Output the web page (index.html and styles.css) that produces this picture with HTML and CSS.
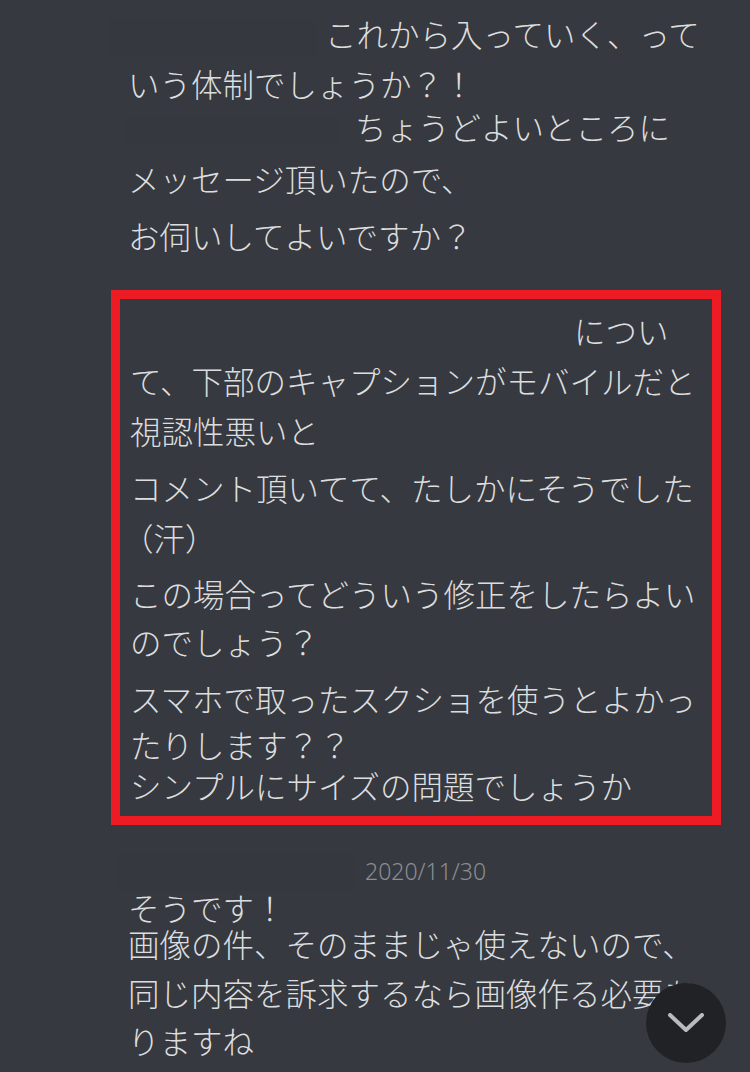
FILE: index.html
```html
<!DOCTYPE html>
<html lang="ja">
<head>
    <meta charset="UTF-8">
    <meta name="viewport" content="width=device-width, initial-scale=1.0">
    <title>Chat</title>
    <link rel="stylesheet" href="styles.css">
</head>
<body>
    <div class="chat">
        <div class="msg">
            <div class="line"><span class="redact r1"></span>これから入っていく、って</div>
            <div class="line g10">いう体制でしょうか？！</div>
            <div class="line g3"><span class="redact r2"></span>ちょうどよいところに</div>
            <div class="line g12">メッセージ頂いたので、</div>
            <div class="line g17">お伺いしてよいですか？</div>
        </div>

        <div class="msg marked">
            <div class="line"><span class="spacer"></span>につい</div>
            <div class="line g10">て、下部のキャプションがモバイルだと</div>
            <div class="line g10">視認性悪いと</div>
            <div class="line g17">コメント頂いてて、たしかにそうでした</div>
            <div class="line g10 paren">（汗）</div>
            <div class="line g16">この場合ってどういう修正をしたらよい</div>
            <div class="line g8">のでしょう？</div>
            <div class="line g17">スマホで取ったスクショを使うとよかっ</div>
            <div class="line g6">たりします？？</div>
            <div class="line g1">シンプルにサイズの問題でしょうか</div>
        </div>

        <div class="msg reply">
            <div class="line head"><span class="redact r3"></span><span class="date">2020/11/30</span></div>
            <div class="line gn4">そうです！</div>
            <div class="line gn4">画像の件、そのままじゃ使えないので、</div>
            <div class="line g9">同じ内容を訴求するなら画像作る必要あ</div>
            <div class="line g8">りますね</div>
        </div>
    </div>

    <button class="jump" aria-label="最新のメッセージへ">
        <svg width="36" height="20" viewBox="0 0 36 20">
            <polyline points="2,2 18,17 34,2" fill="none" stroke="#b9bbbe" stroke-width="4" stroke-linecap="round" stroke-linejoin="round"/>
        </svg>
    </button>
</body>
</html>
```

FILE: styles.css
```css
body {
    margin: 0;
    background-color: #36393f;
    color: #dcddde;
    font-family: "Noto Sans CJK JP", "Noto Sans", sans-serif;
    overflow: hidden;
}
.chat {
    padding: 18px 0 0 128px;
    height: 1072px;
    box-sizing: border-box;
}
.line {
    font-size: 31.5px;
    font-weight: 300;
    line-height: 30px;
    height: 30px;
    white-space: nowrap;
}
.g1 { margin-top: 11px; }
.g3 { margin-top: 13px; }
.g6 { margin-top: 16px; }
.g8 { margin-top: 18px; }
.g9 { margin-top: 19px; }
.g10 { margin-top: 20px; }
.g12 { margin-top: 22px; }
.g16 { margin-top: 26px; }
.g17 { margin-top: 27px; }
.gn4 { margin-top: 6px; }
.paren {
    margin-left: -8px;
}
.redact {
    display: inline-block;
    vertical-align: middle;
    background-color: #35383f;
}
.r1 {
    width: 210px;
    height: 37px;
    margin: -3px 7px 0 -20px;
}
.r2 {
    width: 215px;
    height: 28px;
    margin: 0 15px 0 -3px;
}
.r3 {
    width: 237px;
    height: 37px;
    margin: -8px 10px 0 -10px;
}
.spacer {
    display: inline-block;
    width: 444px;
}
.marked {
    margin: 40px 0 0 -17px;
    width: 610px;
    box-sizing: border-box;
    border: 9px solid #ed1c24;
    padding: 16px 0 16px 10px;
}
.reply {
    margin-top: 31px;
}
.date {
    font-family: "Noto Sans", sans-serif;
    font-size: 23px;
    color: #8a8d92;
    vertical-align: top;
}
.jump {
    position: fixed;
    right: 24px;
    bottom: 9px;
    width: 80px;
    height: 80px;
    border: none;
    border-radius: 50%;
    background-color: #202225;
    display: flex;
    align-items: center;
    justify-content: center;
    padding: 0;
}
```
